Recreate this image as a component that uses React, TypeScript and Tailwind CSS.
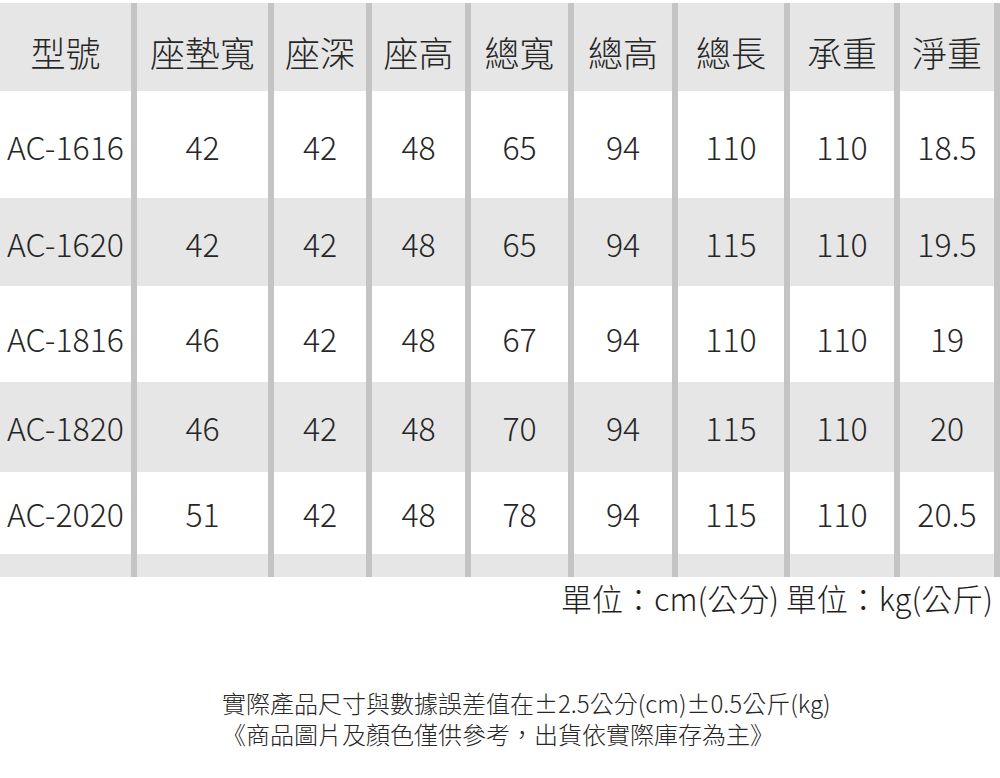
const FONT = "font-['Noto_Sans_CJK_TC','Noto_Sans',sans-serif] font-light";

// 9 data columns with 6px separators between and after them
const GRID =
  "grid grid-cols-[131px_6px_131px_6px_92px_6px_93px_6px_97px_6px_98px_6px_106px_6px_104px_6px_94px_6px]";

const headers = ["型號", "座墊寬", "座深", "座高", "總寬", "總高", "總長", "承重", "淨重"];

const rows: { cells: string[]; bg: string; h: string }[] = [
  { cells: ["AC-1616", "42", "42", "48", "65", "94", "110", "110", "18.5"], bg: "bg-white", h: "h-[107px] pt-[2px]" },
  { cells: ["AC-1620", "42", "42", "48", "65", "94", "115", "110", "19.5"], bg: "bg-[#e6e6e6]", h: "h-[88px] pt-[2px]" },
  { cells: ["AC-1816", "46", "42", "48", "67", "94", "110", "110", "19"], bg: "bg-white", h: "h-[96px] pt-[8px]" },
  { cells: ["AC-1820", "46", "42", "48", "70", "94", "115", "110", "20"], bg: "bg-[#e6e6e6]", h: "h-[90px] pt-0" },
  { cells: ["AC-2020", "51", "42", "48", "78", "94", "115", "110", "20.5"], bg: "bg-white", h: "h-[82px] pt-0" },
];

function Row({ cells, bg, h, head }: { cells: string[]; bg: string; h: string; head?: boolean }) {
  return (
    <div className={`${GRID} ${bg}`}>
      {cells.map((c, i) => [
        <div
          key={`c${i}`}
          className={`${h} flex items-center justify-center ${head ? "text-[35px]" : "text-[32px]"} text-[#262626]`}
        >
          {c}
        </div>,
        <div key={`s${i}`} className="bg-[#c4c4c4]" />,
      ])}
    </div>
  );
}

export default function App() {
  return (
    <div className={`w-[1000px] h-[778px] overflow-hidden bg-white ${FONT}`}>
      <div className="pt-[3px]">
        <Row cells={headers} bg="bg-[#e6e6e6]" h="h-[88px] pt-[10px]" head />
        {rows.map((r) => (
          <Row key={r.cells[0]} cells={r.cells} bg={r.bg} h={r.h} />
        ))}
        {/* trailing gray strip */}
        <Row cells={Array(9).fill("")} bg="bg-[#e6e6e6]" h="h-[23px]" />
      </div>

      <div className="flex h-[42px] items-center justify-end pr-[7px] text-[31px] text-[#1f1f1f]">
        單位：cm(公分) 單位：kg(公斤)
      </div>

      <div className="mt-[68px] pl-[222px] text-[24px] leading-[31px] text-[#262626]">
        <div>實際產品尺寸與數據誤差值在±2.5公分(cm)±0.5公斤(kg)</div>
        <div>《商品圖片及顏色僅供參考，出貨依實際庫存為主》</div>
      </div>
    </div>
  );
}
